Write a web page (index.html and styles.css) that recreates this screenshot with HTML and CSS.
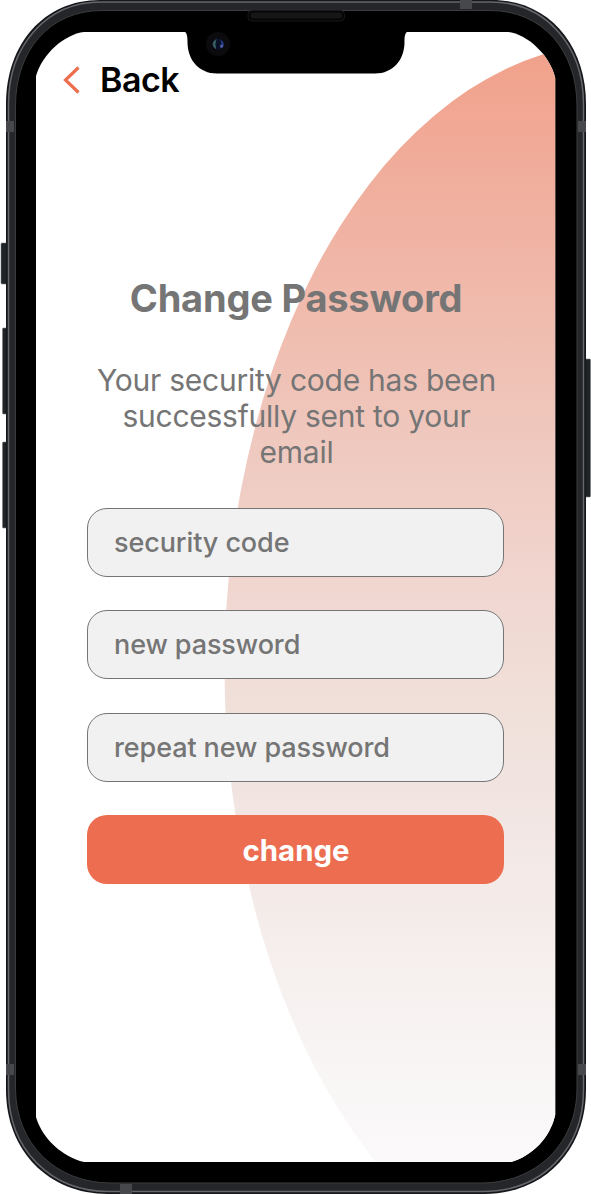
FILE: index.html
```html
<!DOCTYPE html>
<html lang="en">
<head>
<meta charset="utf-8">
<title>Change Password</title>
<link rel="stylesheet" href="styles.css">
</head>
<body>
<div class="phone">
  <svg class="artwork" viewBox="0 0 591 1194" aria-hidden="true">
    <defs>
      <linearGradient id="blush" gradientUnits="userSpaceOnUse" x1="0" y1="42" x2="0" y2="1200">
        <stop offset="0" stop-color="#f1a08a"/>
        <stop offset=".37" stop-color="#efcbc2"/>
        <stop offset=".47" stop-color="#f1d6d0"/>
        <stop offset=".56" stop-color="#f0dfd8"/>
        <stop offset=".67" stop-color="#f2e6e3"/>
        <stop offset=".85" stop-color="#f7f3f2"/>
        <stop offset="1" stop-color="#fcfbfd"/>
      </linearGradient>
      <clipPath id="screen">
        <path d="M84 32H508C527 34 550 55 555.200 78V1115C550 1138 532 1156 511 1162H84C62 1157 42 1138 36 1117V76C42 54 65 34 84 32Z"/>
      </clipPath>
    </defs>
    <!-- side buttons -->
    <g fill="#202326" stroke="#777b7c" stroke-width=".6">
      <rect x="1" y="243" width="8" height="41" rx="1"/>
      <rect x="2.500" y="328" width="8" height="86" rx="1"/>
      <rect x="2.500" y="442" width="8" height="86" rx="1"/>
      <rect x="583" y="359" width="7.500" height="138" rx="1"/>
    </g>
    <!-- metal rim -->
    <path fill="#15171a" d="M100 0H492C548 0 586 44 586 104V1090C586 1150 544 1194 484 1194H108C48 1194 6 1150 6 1090V104C6 44 44 0 100 0Z"/>
    <path fill="#24262a" stroke="#65676b" stroke-width="1.500" d="M101 2H491C546 2 583.500 46 583.500 104V1090C583.500 1149 542 1191.500 483 1191.500H109C50 1191.500 8.500 1149 8.500 1090V104C8.500 46 46 2 101 2Z"/>
    <path fill="#000" stroke="#3b3d3d" stroke-width="1" d="M102 10.500H490C543 10.500 577 51 577 106V1088C577 1144 536 1183 481 1183H111C56 1183 15.500 1144 15.500 1088V106C15.500 51 49 10.500 102 10.500Z"/>
    <g fill="#47484c">
      <path d="M460 0h12v9h-12zM6 121h8v11H6zM578 121h8v11h-8zM6 1064h8v11H6zM578 1064h8v11h-8zM120 1184h12v10h-12z"/>
    </g>
    <g clip-path="url(#screen)">
      <path fill="#fff" d="M36 32H556V1162H36z"/>
      <ellipse cx="619.500" cy="669" rx="395" ry="626.600" fill="url(#blush)"/>
    </g>
    <!-- notch -->
    <path d="M184 31C187 33 187.500 36 187.500 42C187.500 60 199 73.500 217 73.500H375C393 73.500 404.500 60 404.500 42C404.500 36 405 33 408 31Z"/>
    <rect x="248" y="10.500" width="96.500" height="10.500" rx="4" fill="#050505" stroke="#1c1c1c" stroke-width=".8"/>
    <rect x="250.500" y="12.500" width="91.500" height="6" rx="3" fill="#161616"/>
    <circle cx="218" cy="44" r="12" fill="#0b0b0d"/>
    <circle cx="218" cy="44" r="5.800" fill="#0a1026"/>
    <path d="M216 39.500Q210.500 44 215.500 48.500Q214 44 216 39.500" fill="#437064" stroke="#355c60"/>
    <path d="M220 39.500Q225.500 42 223 47.500L220 48.500Q223 44 220 39.500" fill="#23418c"/>
    <circle cx="221.500" cy="46" r="1.500" fill="#5d5ba3"/>
  </svg>

  <main class="content">
    <header class="topbar">
      <svg class="chevron" viewBox="0 0 18 28" aria-hidden="true"><path d="M15.500 1.500L2.500 14L15.500 26.500"/></svg>
      <span class="back">Back</span>
    </header>
    <h1 class="title">Change Password</h1>
    <p class="message">Your security code has been<br>successfully sent to your<br>email</p>
    <form class="form">
      <div class="field"><span class="hint">security code</span></div>
      <div class="field"><span class="hint">new password</span></div>
      <div class="field"><span class="hint">repeat new password</span></div>
      <button class="submit" type="button">change</button>
    </form>
  </main>
</div>
</body>
</html>
```
FILE: styles.css
```css
* { box-sizing: border-box; }
body {
  margin: 0;
  background: #fff;
  font-family: Inter, "Liberation Sans", sans-serif;
  color: #757575;
}
.phone {
  position: relative;
  width: 591px;
  height: 1194px;
  overflow: hidden;
}
.artwork {
  position: absolute;
  inset: 0;
  width: 591px;
  height: 1194px;
}
.content {
  position: relative;
  display: flex;
  flex-direction: column;
  padding: 58px 87px 0;
}
.topbar {
  display: flex;
  align-items: center;
  gap: 19px;
  height: 43px;
  margin-left: -24px;
}
.chevron { width: 18px; height: 28px; }
.chevron path { fill: none; stroke: #ed6d4f; stroke-width: 3.2; }
.back {
  color: #000;
  font-size: 34px;
  font-weight: 600;
  line-height: 43px;
  letter-spacing: -.5px;
}
.title {
  margin: 174px 0 0;
  padding-left: 1px;
  font-size: 38px;
  font-weight: 700;
  line-height: 46px;
  letter-spacing: -.2px;
  text-align: center;
  white-space: nowrap;
}
.message {
  margin: 40.5px -20px 0;
  padding-left: 2px;
  font-size: 30px;
  font-weight: 400;
  line-height: 36.2px;
  letter-spacing: -.25px;
  text-align: center;
  white-space: nowrap;
}
.form {
  display: flex;
  flex-direction: column;
  gap: 33.4px;
  margin: 37.9px 0 0;
}
.field {
  display: flex;
  align-items: center;
  height: 69px;
  padding: 0 26px;
  border: 1.4px solid #757575;
  border-radius: 20px;
  background: #f1f1f1;
}
.hint {
  padding-top: 1px;
  font-size: 27px;
  font-weight: 500;
  line-height: 34px;
  letter-spacing: -.1px;
}
.submit {
  height: 69px;
  padding: 2px 0 0 1px;
  border: 0;
  border-radius: 20px;
  background: #ec6d4f;
  color: #fff;
  font: 700 29.4px/36px Inter, "Liberation Sans", sans-serif;
}
```
